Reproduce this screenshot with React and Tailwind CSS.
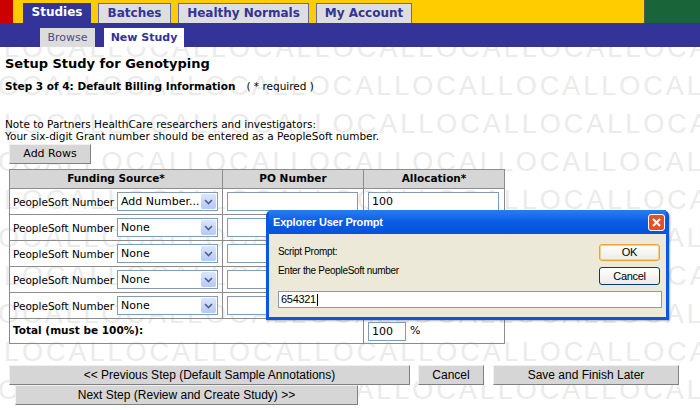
import React from 'react';

const tabs = [
  { label: 'Studies', w: 'w-[68px]' },
  { label: 'Batches', w: 'w-[73px]' },
  { label: 'Healthy Normals', w: 'w-[131px]' },
  { label: 'My Account', w: 'w-[96px]' },
];
const rows = ['Add Number...', 'None', 'None', 'None', 'None'];
const watermarkTops = [37, 75, 113, 151, 189, 227, 265, 303, 341, 379];

function Chevron() {
  return (
    <svg width="9" height="6" viewBox="0 0 9 6">
      <path d="M1 1 L4.5 4.5 L8 1" fill="none" stroke="#4d5f8a" strokeWidth="1.6" />
    </svg>
  );
}

function Select({ value }) {
  return (
    <div className="flex h-[19px] w-[101px] shrink-0 border border-[#7f9db9] bg-white">
      <span className="flex-1 overflow-hidden whitespace-nowrap pl-[3px] text-[11px] leading-[17px] text-black">{value}</span>
      <span className="m-[1px] flex w-[15px] items-center justify-center rounded-[2px] bg-gradient-to-b from-[#dbe6fd] to-[#b5c8f5]">
        <Chevron />
      </span>
    </div>
  );
}

function Field({ value = '', className = '' }) {
  return (
    <div className={`h-[19px] border border-[#7f9db9] bg-white pl-[3px] text-[11px] leading-[17px] text-black ${className}`}>
      {value}
    </div>
  );
}

function GrayButton({ children, className = '' }) {
  return (
    <button className={`block h-[20px] whitespace-nowrap border border-t-[#f0f0f0] border-l-[#f0f0f0] border-r-[#808080] border-b-[#808080] bg-[#d6d6d6] leading-[18px] text-black ${className}`}>
      {children}
    </button>
  );
}

const arial = "font-['Liberation_Sans',sans-serif]";

export default function App() {
  return (
    <div className="relative h-[410px] w-[700px] overflow-hidden bg-white font-['DejaVu_Sans',sans-serif] text-black">

      {/* LOCAL watermark behind the page */}
      <div className="pointer-events-none absolute inset-0 select-none">
        {watermarkTops.map((t, i) => (
          <div
            key={t}
            className={`absolute whitespace-nowrap font-['Liberation_Sans',sans-serif] text-[27px] leading-[27px] tracking-[3px] text-[#ebebeb] ${i % 2 ? 'left-[-20px]' : 'left-[4px]'}`}
            style={{ top: t - 2 }}
          >
            {'LOCAL'.repeat(9)}
          </div>
        ))}
      </div>

      {/* top tabs */}
      <div className="relative flex h-[23px] bg-[#ffcc00]">
        <div className="w-[13px] bg-[#cc0000]" />
        <div className="flex items-end gap-[7px] pl-[10px]">
          {tabs.map((t, i) => (
            <div
              key={t.label}
              className={`h-[20px] whitespace-nowrap text-center text-[12px] font-bold leading-[19px] ${t.w} ${i === 0 ? 'bg-[#333399] text-white' : 'border border-b-0 border-[#6666aa] bg-[#dedede] text-[#333399]'}`}
            >
              {t.label}
            </div>
          ))}
        </div>
        <div className="ml-auto w-[56px] border-l border-[#555] bg-[#1a643a]" />
      </div>

      {/* sub tabs */}
      <div className="relative flex h-[24px] items-end gap-[9px] bg-[#333399] pl-[40px]">
        <div className="h-[19px] w-[55px] bg-[#dcdcdc] text-center text-[11px] leading-[19px] text-[#4a4a8e]">Browse</div>
        <div className="h-[19px] w-[80px] bg-white text-center text-[11px] font-bold leading-[19px] text-[#333399]">New Study</div>
      </div>

      {/* content */}
      <div className="relative px-[5px] text-[10.5px]">
        <h1 className="mt-[8px] text-[13px] font-bold leading-[18px]">Setup Study for Genotyping</h1>
        <div className="mt-[6px] whitespace-nowrap leading-[14px]">
          <span className="font-bold">Step 3 of 4: Default Billing Information</span>
          <span className="ml-[11px]">( * required )</span>
        </div>
        <div className="mt-[25px] whitespace-nowrap leading-[12px]">
          <div>Note to Partners HealthCare researchers and investigators:</div>
          <div>Your six-digit Grant number should be entered as a PeopleSoft number.</div>
        </div>
        <GrayButton className="ml-[4px] mt-[2px] w-[82px] text-[11px]">Add Rows</GrayButton>

        <table className="ml-[4px] mt-[5px] w-[496px] border-collapse border border-[#8c8c8c]">
          <thead>
            <tr className="h-[19px] bg-[#d6d6d6]">
              <th className="w-[213px] border border-[#8c8c8c] font-bold">Funding Source*</th>
              <th className="w-[141px] border border-[#8c8c8c] font-bold">PO Number</th>
              <th className="border border-[#8c8c8c] font-bold">Allocation*</th>
            </tr>
          </thead>
          <tbody>
            {rows.map((r, i) => (
              <tr key={i} className="h-[26px]">
                <td className="border border-[#8c8c8c] pl-[3px]">
                  <div className="flex items-center gap-[4px]">
                    <span className="w-[100px] whitespace-nowrap pt-[3px]">PeopleSoft Number</span>
                    <Select value={r} />
                  </div>
                </td>
                <td className="border border-[#8c8c8c] px-[4px]">
                  <Field className="w-[131px]" />
                </td>
                <td className="border border-[#8c8c8c] px-[4px]">
                  <Field className="w-[131px]" value={i === 0 ? '100' : ''} />
                </td>
              </tr>
            ))}
            <tr className="h-[25px]">
              <td colSpan={2} className="whitespace-nowrap border border-[#8c8c8c] pl-[3px] text-[10.5px] font-bold">Total (must be 100%):</td>
              <td className="border border-[#8c8c8c] px-[4px]">
                <div className="flex items-center gap-[4px]">
                  <Field className="w-[38px]" value="100" />
                  <span className="text-[11px]">%</span>
                </div>
              </td>
            </tr>
          </tbody>
        </table>

        <div className={`mt-[21px] flex items-start gap-[8px] pl-[4px] text-[12px] ${arial}`}>
          <GrayButton className="w-[401px]">&lt;&lt; Previous Step (Default Sample Annotations)</GrayButton>
          <GrayButton className="w-[66px]">Cancel</GrayButton>
          <GrayButton className="ml-[1px] w-[186px]">Save and Finish Later</GrayButton>
        </div>
        <GrayButton className={`ml-[10px] w-[343px] text-[12px] ${arial}`}>Next Step (Review and Create Study) &gt;&gt;</GrayButton>
      </div>

      {/* Explorer User Prompt dialog */}
      <div className={`absolute left-[266px] top-[210px] w-[403px] rounded-t-[6px] bg-[#0a58e0] px-[3px] pb-[3px] shadow-[1px_1px_2px_rgba(0,0,0,0.3)] ${arial}`}>
        <div className="flex h-[24px] items-center justify-between bg-gradient-to-b from-[#2b7cf0] via-[#0a5ce6] to-[#0552d8] pl-[4px] pr-[1px]">
          <span className="text-[11px] font-bold tracking-[-0.2px] text-white">Explorer User Prompt</span>
          <span className="flex h-[17px] w-[17px] items-center justify-center rounded-[3px] border border-white bg-[#e2502c]">
            <svg width="9" height="9" viewBox="0 0 9 9">
              <path d="M1 1 L8 8 M8 1 L1 8" stroke="white" strokeWidth="2" />
            </svg>
          </span>
        </div>
        <div className="flex flex-wrap bg-[#ece9d8] pb-[9px] pl-[9px] pr-[4px] pt-[9px] text-[10px] tracking-[-0.3px] text-black">
          <div className="flex-1 pt-[2px]">
            <div className="leading-[13px]">Script Prompt:</div>
            <div className="mt-[6px] leading-[13px]">Enter the PeopleSoft number</div>
          </div>
          <div className="mr-[2px] flex w-[61px] flex-col gap-[6px] pt-[1px] text-[11px]">
            <div className="h-[17px] rounded-[3px] border border-[#e8a33a] bg-gradient-to-b from-white to-[#ecebe6] text-center leading-[15px] shadow-[inset_0_0_0_1px_#f7cf8a]">OK</div>
            <div className="h-[18px] rounded-[3px] border border-[#003c74] bg-gradient-to-b from-white to-[#ecebe6] text-center leading-[16px]">Cancel</div>
          </div>
          <div className="mt-[6px] flex h-[17px] w-full items-center border border-[#7f9db9] bg-white pl-[2px] text-[11px] leading-[15px]">
            654321<span className="ml-[1px] inline-block h-[12px] w-[1px] bg-black" />
          </div>
        </div>
      </div>
    </div>
  );
}
